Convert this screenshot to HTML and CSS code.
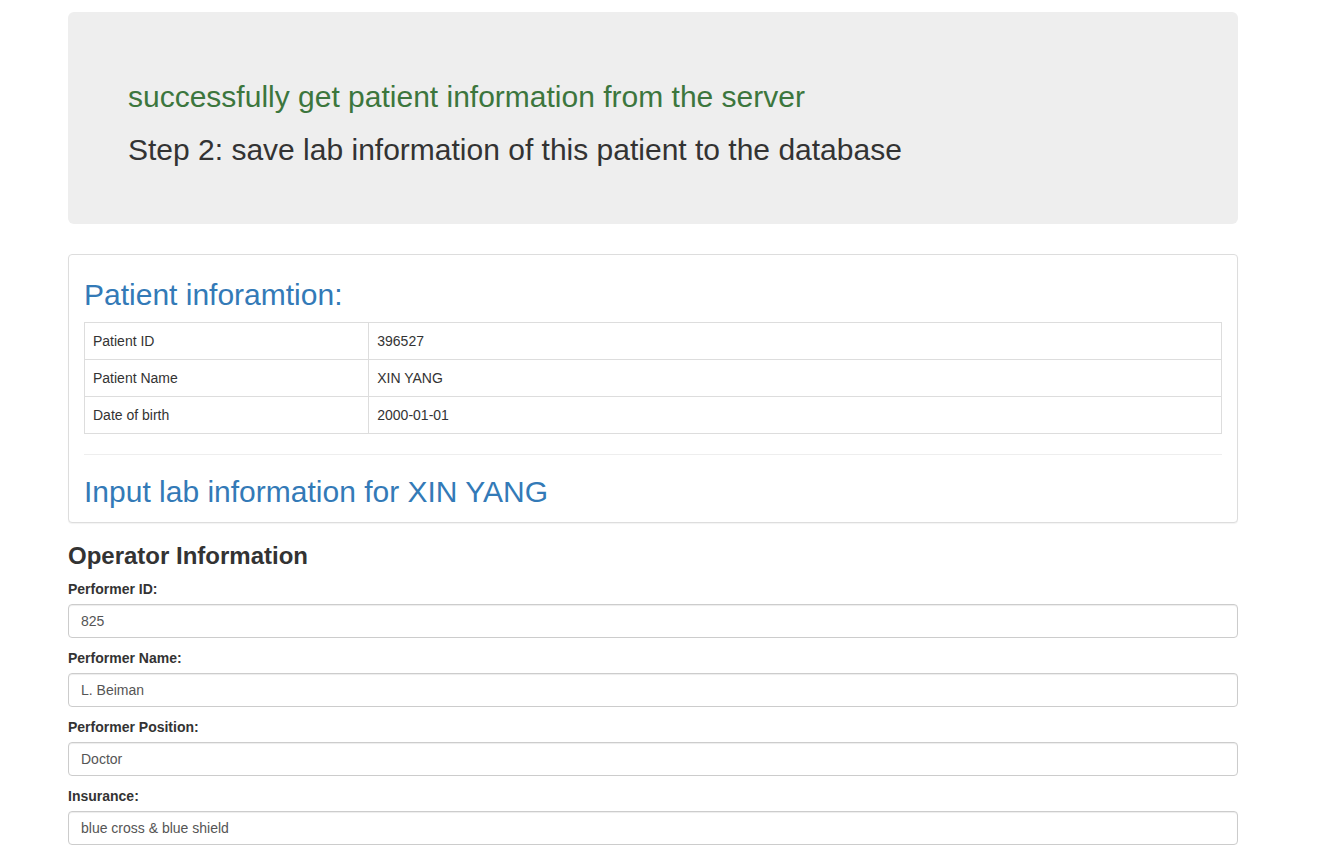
FILE: index.html
```html
<!DOCTYPE html>
<html lang="en">
<head>
<meta charset="utf-8">
<title>Lab information</title>
<link rel="stylesheet" href="styles.css">
</head>
<body>
<div class="page">
  <div class="jumbotron">
    <h2 class="text-success">successfully get patient information from the server</h2>
    <h2>Step 2: save lab information of this patient to the database</h2>
  </div>

  <div class="panel">
    <div class="panel-body">
      <h2 class="panel-title">Patient inforamtion:</h2>
      <table class="info-table">
        <tr><td class="key">Patient ID</td><td>396527</td></tr>
        <tr><td class="key">Patient Name</td><td>XIN YANG</td></tr>
        <tr><td class="key">Date of birth</td><td>2000-01-01</td></tr>
      </table>
      <hr class="divider">
      <h2 class="panel-subtitle">Input lab information for XIN YANG</h2>
    </div>
  </div>

  <h3 class="section-title">Operator Information</h3>
  <form class="form">
    <div class="form-group">
      <label class="form-label" for="pid">Performer ID:</label>
      <input class="form-control" id="pid" type="text" value="825">
    </div>
    <div class="form-group">
      <label class="form-label" for="pname">Performer Name:</label>
      <input class="form-control" id="pname" type="text" value="L. Beiman">
    </div>
    <div class="form-group">
      <label class="form-label" for="ppos">Performer Position:</label>
      <input class="form-control" id="ppos" type="text" value="Doctor">
    </div>
    <div class="form-group">
      <label class="form-label" for="ins">Insurance:</label>
      <input class="form-control" id="ins" type="text" value="blue cross &amp; blue shield">
    </div>
  </form>
</div>
</body>
</html>
```
FILE: styles.css
```css
* {
  box-sizing: border-box;
}

html, body {
  margin: 0;
  padding: 0;
  background: #fff;
}

body {
  font-family: "Liberation Sans", Arial, Helvetica, sans-serif;
  font-size: 14px;
  line-height: 1.42857143;
  color: #333;
}

.page {
  width: 1170px;
  margin: 0 0 0 68px;
  padding-top: 12px;
}

.jumbotron {
  background: #eee;
  border-radius: 6px;
  padding: 48px 60px;
  margin-bottom: 30px;
  display: flow-root;
}

.jumbotron h2 {
  font-size: 30px;
  font-weight: 500;
  line-height: 1.1;
  margin: 20px 0 10px;
  color: #333;
}

.jumbotron h2.text-success {
  color: #3c763d;
}

.panel {
  border: 1px solid #ddd;
  border-radius: 4px;
  background: #fff;
  margin-bottom: 20px;
  box-shadow: 0 1px 1px rgba(0, 0, 0, 0.05);
}

.panel-body {
  padding: 15px 15px 14px;
}

.panel-title,
.panel-subtitle {
  font-size: 30px;
  font-weight: 500;
  line-height: 1.1;
  color: #337ab7;
}

.panel-title {
  margin: 8px 0 11px;
}

.panel-subtitle {
  margin: 20px 0 0;
}

.info-table {
  width: 100%;
  border-collapse: collapse;
  border-spacing: 0;
  border: 1px solid #ddd;
  margin-bottom: 20px;
  font-size: 14px;
}

.info-table td {
  border: 1px solid #ddd;
  padding: 8px;
  line-height: 20px;
  vertical-align: top;
}

.info-table td.key {
  width: 25%;
}

.divider {
  border: 0;
  border-top: 1px solid #eee;
  margin: 20px 0;
}

.section-title {
  font-size: 24px;
  font-weight: 700;
  line-height: 1.1;
  margin: 20px 0 10px;
  color: #333;
}

.form {
  margin: 0;
}

.form-group {
  margin-bottom: 10px;
}

.form-label {
  display: block;
  font-weight: 700;
  font-size: 14px;
  line-height: 20px;
  margin-bottom: 5px;
  color: #333;
}

.form-control {
  display: block;
  width: 100%;
  height: 34px;
  padding: 6px 12px;
  font-family: inherit;
  font-size: 14px;
  line-height: 1.42857143;
  color: #555;
  background: #fff;
  border: 1px solid #ccc;
  border-radius: 4px;
  box-shadow: inset 0 1px 1px rgba(0, 0, 0, 0.075);
  margin: 0;
}
```
